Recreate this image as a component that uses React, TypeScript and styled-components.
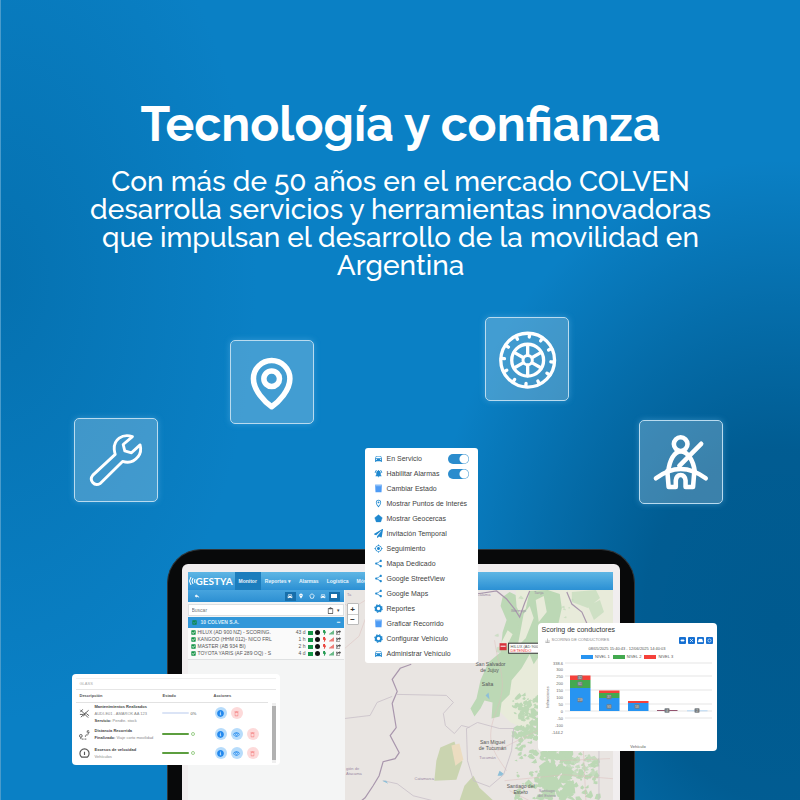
import React from "react";
import styled, { createGlobalStyle, css } from "styled-components";
import {
  MdDirectionsCar,
  MdNotificationsActive,
  MdShare,
  MdGpsFixed,
  MdOutlineLocationOn,
  MdReply,
  MdPlace,
  MdDeleteOutline,
  MdOutlineRemoveRedEye,
} from "react-icons/md";
import {
  FaPaperPlane,
  FaShareSquare,
  FaInfoCircle,
  FaSignal,
  FaBolt,
  FaCheckSquare,
  FaRegClipboard,
} from "react-icons/fa";

const GlobalStyle = createGlobalStyle`
  * { box-sizing: border-box; }
  body { margin: 0; background: #0a80c5; }
  button { font: inherit; padding: 0; border: 0; cursor: pointer; }
`;

const sans = `"Liberation Sans", Arial, sans-serif`;

const Page = styled.main`
  display: flex;
  flex-direction: column;
  min-height: 100vh;
  overflow: hidden;
  border-left: 1px solid #4a9bcb;
  font-family: ${sans};
  background:
    radial-gradient(ellipse 44% 58% at 97% 78%, #005a8f 0%, #005a8ff0 38%, #005a8f80 68%, #005a8f00 100%),
    radial-gradient(ellipse 32% 55% at 0% 35%, #0571b0 0%, #0571b000 100%),
    #0a80c5;
`;

const Intro = styled.header`
  padding: 94px 80px 0;
  text-align: center;
  color: #fff;
  font-family: Raleway, Lato, sans-serif;
`;

const Title = styled.h1`
  margin: 0;
  font-size: 48px;
  line-height: 60px;
  font-weight: 700;
`;

const Lead = styled.p`
  margin: 14px auto 0;
  max-width: 640px;
  font-size: 28px;
  line-height: 28px;
  font-weight: 500;
`;

const Scene = styled.section`
  position: relative;
  flex: 1;
  display: flex;
  flex-direction: column;
  margin-top: 37px;
`;

const Tiles = styled.div`
  display: grid;
  grid-template-columns: 156fr 255fr 154fr 84px;
  align-items: start;
  padding: 0 77px 0 73px;
  height: 232px;
`;

const Tile = styled.div<{ $drop: number }>`
  width: 84px;
  height: 84px;
  margin-top: ${(p) => p.$drop}px;
  border: 1px solid #b9dbef;
  border-radius: 5px;
  background: rgba(255, 255, 255, 0.23);
  box-shadow: 0 0 6px rgba(120, 195, 240, 0.4);

  svg {
    display: block;
    width: 100%;
    height: 100%;
    fill: none;
    stroke: #fff;
    stroke-linecap: round;
    stroke-linejoin: round;
  }
`;

const Device = styled.div`
  flex: 1;
  display: flex;
  width: 468px;
  min-width: 58%;
  align-self: center;
  padding: 14px 14px 0;
  border-radius: 34px 34px 0 0;
  border: 1px solid #303437;
  border-bottom: 0;
  background: #08090a;
`;

const Screen = styled.div`
  flex: 1;
  display: flex;
  flex-direction: column;
  padding: 8px 7px 0 6px;
  border-radius: 6px 6px 0 0;
  background: #f1eeef;
`;

const NavBar = styled.nav`
  display: flex;
  align-items: stretch;
  height: 18px;
  color: #fff;
  background: linear-gradient(#5fb6e4, #2b90d4);
`;

const Brand = styled.div`
  display: flex;
  align-items: center;
  width: 47px;
  font: 700 10px/18px Lato, sans-serif;

  svg {
    width: 8px;
    height: 10px;
    fill: none;
    stroke: #fff;
  }
`;

const NavLink = styled.a<{ $active?: boolean }>`
  padding: 0 4px;
  color: #e9f5fc;
  font: 700 5px/18px ${sans};
  white-space: nowrap;
  text-decoration: none;
  background: ${(p) => (p.$active ? "#1c7dbd" : "transparent")};
`;

const Workspace = styled.div`
  flex: 1;
  display: flex;
`;

const Sidebar = styled.aside`
  flex: 0 0 157px;
  padding-right: 1px;
  background: #f4f5f5;
`;

const ToolStrip = styled.div`
  display: flex;
  align-items: center;
  height: 12px;
  padding: 0 4px;
  color: #fff;
  background: linear-gradient(#47a4de, #2c8fd2);
`;

const Spacer = styled.span`
  flex: 1;
`;

const ToolButton = styled.button<{ $on?: boolean }>`
  display: flex;
  align-items: center;
  justify-content: center;
  width: 11px;
  height: 9px;
  color: #fff;
  background: ${(p) => (p.$on ? "#176fab" : "transparent")};

  svg {
    width: 6px;
    height: 6px;
  }
`;

const SearchRow = styled.div`
  display: flex;
  align-items: center;
  gap: 3px;
  height: 12px;
  margin: 2px 0 1px;
  padding: 0 3px;
  border: 1px solid #dcdfe1;
  background: #fff;
  color: #444;
  font-size: 5px;

  input {
    flex: 1;
    min-width: 0;
    height: 9px;
    padding: 0;
    border: 0;
    outline: 0;
    background: none;
    font: 5px/9px ${sans};
  }
  input::placeholder { color: #777; }
  svg { width: 7px; height: 7px; }
`;

const GroupRow = styled.div`
  display: flex;
  align-items: center;
  gap: 4px;
  height: 11px;
  padding: 0 4px;
  color: #d9eefa;
  background: #3197d9;
  font: 700 5px/11px ${sans};

  svg { width: 5px; height: 5px; color: #108b4f; }
`;

const Vehicles = styled.ul`
  margin: 0;
  padding: 1px 3px 2px;
  list-style: none;
  border-bottom: 1px solid #dfe1e2;
  background: #fafafa;
`;

const Vehicle = styled.li`
  display: flex;
  align-items: center;
  gap: 2px;
  height: 7px;
  color: #555;
  font: 5px/7px ${sans};
  white-space: nowrap;

  svg { width: 5px; height: 5px; flex: none; }
`;

const Mark = styled.i<{ $color: string; $round?: boolean }>`
  width: 5px;
  height: ${(p) => (p.$round ? 5 : 4)}px;
  border-radius: ${(p) => (p.$round ? "50%" : "0")};
  background: ${(p) => p.$color};
`;

const Tint = styled.span<{ $color: string }>`
  display: flex;
  color: ${(p) => p.$color};
`;

const MapArea = styled.div`
  position: relative;
  flex: 1;
  min-height: 210px;
  overflow: hidden;
  background: #e9e5e2;

  > svg {
    position: absolute;
    inset: 0;
    width: 100%;
    height: 100%;
    font-family: ${sans};
  }
`;

const ZoomControl = styled.div`
  position: absolute;
  left: 2px;
  top: 13px;
  display: grid;
  border: 1px solid #bbb;
  border-radius: 1px;
  background: #fff;

  button {
    width: 10px;
    height: 10px;
    font: 700 8px/9px ${sans};
    color: #333;
    background: #fff;
  }
  button + button { border-top: 1px solid #ccc; }
`;

const floating = css`
  position: absolute;
  border-radius: 4px;
  background: #fff;
`;

const Menu = styled.ul`
  ${floating}
  top: 131px;
  left: calc(50% - 36px);
  width: 113px;
  margin: 0;
  padding: 3px 0 2px 9px;
  border-radius: 3px;
  list-style: none;
`;

const MenuItem = styled.li`
  display: flex;
  align-items: center;
  height: 15px;
  color: #3f3f3f;
  font: 7px/15px ${sans};
  white-space: nowrap;

  > svg {
    flex: none;
    width: 9px;
    height: 9px;
    margin-right: 4px;
    color: #1f88cf;
  }
  label { flex: 1; }
`;

const Toggle = styled.input`
  appearance: none;
  width: 21px;
  height: 10px;
  margin: 0 9px 0 0;
  border-radius: 5px;
  background: radial-gradient(circle at 16px 5px, #fff 4px, #2b8ccd 5px);
`;

const Alerts = styled.section`
  ${floating}
  top: 357px;
  left: calc(50% - 329px);
  width: 208px;
  height: 91px;
  padding: 4px 4px 0 4px;
`;

const AlertsHead = styled.h2`
  margin: 0;
  padding: 0 4px;
  border-top: 1px solid #f0f0f0;
  border-bottom: 1px solid #e6e6e6;
  color: #aaa;
  font: 4px/10px ${sans};
`;

const AlertsBody = styled.div`
  display: flex;
`;

const AlertTable = styled.table`
  flex: 1;
  table-layout: fixed;
  border-collapse: collapse;
  color: #666;
  font: 4px/7px ${sans};

  th {
    height: 12px;
    padding: 0 4px;
    text-align: left;
    color: #555;
    font-weight: 700;
    border-bottom: 1px solid #e2e2e2;
  }
  td { height: 19px; padding: 0; }
  tbody tr:first-child td { height: 22px; }
`;

const Col = styled.col<{ $w: number }>`
  width: ${(p) => p.$w}px;
`;

const AlertName = styled.div`
  display: flex;
  align-items: center;
  gap: 5px;
  padding-left: 3px;

  svg {
    width: 11px;
    height: 11px;
    fill: none;
    stroke: #555;
  }
  p { margin: 0; white-space: nowrap; color: #888; }
  strong { color: #444; }
`;

const Status = styled.div`
  display: flex;
  align-items: center;
  gap: 2px;
  padding-left: 3px;
  color: #555;
`;

const Bar = styled.span<{ $full: boolean }>`
  width: 27px;
  height: 2px;
  border-radius: 1px;
  background: ${(p) => (p.$full ? "#5c9e3f" : "#dbe4f6")};
`;

const Ring = styled.span`
  width: 4px;
  height: 4px;
  border: 1px solid #9bcf8b;
  border-radius: 50%;
`;

const Actions = styled.div`
  display: flex;
  gap: 4px;
  padding-left: 5px;
`;

const RoundButton = styled.button<{ $danger?: boolean }>`
  display: flex;
  align-items: center;
  justify-content: center;
  width: 12px;
  height: 12px;
  border-radius: 50%;
  color: ${(p) => (p.$danger ? "#f58a8a" : "#2389ee")};
  background: ${(p) => (p.$danger ? "#fddada" : "#b7dcfb")};

  svg { width: 7px; height: 7px; }
`;

const ScrollTrack = styled.div`
  width: 4px;
  height: 60px;
  margin: 13px 0 0 4px;
  border: solid #eee;
  border-width: 3px 0;
  background: #b1b1b1;
`;

const Report = styled.section`
  ${floating}
  top: 306px;
  left: calc(50% + 137px);
  width: 179px;
  height: 128px;
  padding: 2px 4px 0;
`;

const ReportTitle = styled.h2`
  margin: 0;
  color: #333;
  font: 7px/10px ${sans};
`;

const ReportBar = styled.div`
  display: flex;
  align-items: center;
  gap: 2px;
  height: 10px;
  padding-left: 3px;
  color: #888;
  font: 4px/10px ${sans};
`;

const BlueButton = styled.button`
  width: 7px;
  height: 7px;
  border-radius: 1px;
  background: #1670d2;

  svg {
    display: block;
    width: 7px;
    height: 7px;
    fill: #fff;
    stroke: #fff;
  }
`;

const Period = styled.p`
  margin: 0;
  text-align: center;
  color: #555;
  font: 4px/7px ${sans};
`;

const Legend = styled.div`
  display: flex;
  justify-content: center;
  gap: 3px;
  color: #555;
  font: 4px/8px ${sans};
  padding-top: 1px;

  span {
    display: flex;
    align-items: center;
    gap: 2px;
  }
`;

const Swatch = styled.i<{ $color: string }>`
  width: 12px;
  height: 4px;
  background: ${(p) => p.$color};
`;

const Chart = styled.svg`
  display: block;
  width: 100%;
  font-family: ${sans};
`;

const Bucket = () => (
  <svg viewBox="0 0 24 24" fill="#4d9bf5">
    <path d="M3 2h18l-1 20H4z" />
    <path d="M3 2h18v4H3z" fill="#8abdf7" />
  </svg>
);
const Pentagon = () => (
  <svg viewBox="0 0 24 24" fill="currentColor">
    <path d="M12 2 22 10 18 21H6L2 10z" stroke="currentColor" strokeLinejoin="round" />
  </svg>
);
const Gear = () => (
  <svg viewBox="0 0 24 24" fill="none" stroke="currentColor">
    <circle cx="12" cy="12" r="7" strokeWidth="5" />
    <circle cx="12" cy="12" r="10" strokeWidth="3" strokeDasharray="4 3.85" />
  </svg>
);

const menuEntries: { label: string; icon: React.ReactNode; toggle?: string }[] = [
  { label: "En Servicio", icon: <MdDirectionsCar />, toggle: "servicio" },
  { label: "Habilitar Alarmas", icon: <MdNotificationsActive />, toggle: "alarmas" },
  { label: "Cambiar Estado", icon: <Bucket /> },
  { label: "Mostrar Puntos de Interés", icon: <MdOutlineLocationOn /> },
  { label: "Mostrar Geocercas", icon: <Pentagon /> },
  { label: "Invitación Temporal", icon: <FaPaperPlane /> },
  { label: "Seguimiento", icon: <MdGpsFixed /> },
  { label: "Mapa Dedicado", icon: <MdShare /> },
  { label: "Google StreetView", icon: <MdShare /> },
  { label: "Google Maps", icon: <MdShare /> },
  { label: "Reportes", icon: <Gear /> },
  { label: "Graficar Recorrido", icon: <Bucket /> },
  { label: "Configurar Vehículo", icon: <Gear /> },
  { label: "Administrar Vehículo", icon: <MdDirectionsCar /> },
];

const vehicles = [
  { name: "HILUX (AD 900 NZ) - SCORING.", age: "43 d", bolt: "#159447", signal: "#159447" },
  { name: "KANGOO (HHM 012)- NICO FRL", age: "1 h", bolt: "#e8352e", signal: "#e8352e" },
  { name: "MASTER (AB 934 BI)", age: "2 h", bolt: "#e8352e", signal: "#e8352e" },
  { name: "TOYOTA YARIS (AF 289 OQ) - S", age: "4 d", bolt: "#159447", signal: "#159447" },
];

function random(seed: number) {
  let s = seed;
  return () => {
    s = (s * 16807) % 2147483647;
    return s / 2147483647;
  };
}

function thicket(seed: number, count: number, x: number, y: number, w: number, h: number, size: number) {
  const next = random(seed);
  let d = "";
  for (let i = 0; i < count; i++) {
    const px = x + next() * w;
    const py = y + next() * h;
    const r = size * (0.4 + next());
    d += `M${px} ${py}l${r} ${-r * next()}l${r * next()} ${r}l${-r * 0.6} ${r * next()}l${-r} ${-r * 0.3}z`;
  }
  return d;
}

function RegionMap() {
  return (
    <svg viewBox="346 590 267 210" preserveAspectRatio="xMinYMin slice" role="img" aria-label="Mapa">
      <path d="M516 590h97v80h-60l-24 60-18-8-14-14 4-30 18-44z" fill="#e8ebda" />
      <g fill="#bcd8b5">
        <path d="M503 597l7-5 6 3 1 12 3 6 6-4 4-18 18-1 12 4 2 14-4 18-10 4-6 22-8 12-4-10-8 14-10 12-2 14-8 8-2 14-8 2 1-16-8-2-4 8-6 8-4-8 6-10 4-18 8-18 12-10 2-20 4-12-6-14z" />
        <path d="M572 592l24-2 4 8-12 10-16-6zM588 606l12-6 4 12-10 8z" opacity=".6" />
        <path d={thicket(7, 90, 512, 694, 26, 44, 3)} />
        <path d={thicket(31, 170, 513, 726, 84, 72, 3)} />
        <path d={thicket(83, 100, 538, 742, 30, 56, 5)} />
        <path d={thicket(19, 50, 560, 750, 34, 24, 3)} opacity=".8" />
        <path d={thicket(51, 24, 496, 592, 80, 60, 3)} opacity=".6" />
      </g>
      <g fill="#cad4b0">
        <path d="M441 747l14-6 4 12 4 8-6 18-22 1 2-20z" />
        <path d="M465 785l9-10 6 12 14 13h-34z" />
      </g>
      <path d="M452 745l8-2 4 16-8 6z" fill="#ecdcc0" />
      <path d="M524 614l6-8 4 12-8 20-8 8zM536 600l8-4 3 16-8 10zM508 630l5 4-8 16-4-6z" fill="#e8ebda" />
      <g fill="none" stroke="#dcbdbb" strokeWidth=".7" opacity=".7">
        <path d="M346 604c10 10 20-10 36-8M495 640c4 30 14 40 2 70s-4 40 10 60M498 750l40-20 70-10M505 780l60-6 48 4M346 648l14-12 8-22M510 790l20 10M560 760l50-2M582 720l4 80" />
      </g>
      <g fill="none" stroke="#a997ad" strokeWidth="1.2">
        <path d="M412 664l-11 4-8 11 5 12-5 12 4 24-6 8 9 17-4 6-12 3-4 14-6 10-8 12-5 4" />
        <path d="M477 594l20-3 10 8 8 10 5 8 5-14 5-12M567 592l5 12 10 8 8 18 5 15" />
      </g>
      <g fill="none" stroke="#c8bfc8" strokeWidth=".8">
        <path d="M346 718l25-3 7-13 15-6M397 694l50 1 7 7-10 11 2 12 9 8 7-8 8 2" />
        <path d="M467 728l11-6 22 6h14l-2 22-8 24-14 12-16-6-6-20zM599 750v50M384 780l14 3 16 12 20 5" />
      </g>
      <path d="M486 695l3-3 1 7zM498 775l2-5 4 3-2 2zM383 780l4 0 2 3z" fill="#8dbfd8" />
      <g fill="#555" fontSize="5" textAnchor="middle">
        <text x="491" y="666">San Salvador</text>
        <text x="490" y="672">de Jujuy</text>
        <text x="488" y="686">Salta</text>
        <text x="493" y="743">San Miguel</text>
        <text x="493" y="749">de Tucumán</text>
        <text x="521" y="787">Santiago del</text>
        <text x="521" y="793">Estero</text>
      </g>
      <g fill="#9b8aa3" fontSize="4" textAnchor="middle">
        <text x="488" y="758">Tucumán</text>
        <text x="425" y="779">Catamarca</text>
        <text x="347" y="769" textAnchor="start">gión de</text>
        <text x="347" y="774" textAnchor="start">Atacama</text>
        <text x="547" y="791">Santiago</text>
        <text x="547" y="796">del Estero</text>
        <text x="519" y="612">Bermejo</text>
        <text x="539" y="594">Tarija</text>
        <text x="484" y="596">Calama</text>
        <text x="350" y="596">Ta</text>
      </g>
      <rect x="500" y="643" width="7" height="7" fill="#d7323b" />
      <path d="M501 646h5" stroke="#fff" />
      <rect x="509" y="643" width="60" height="10" fill="#fff" stroke="#333" />
      <text x="511" y="648" fontSize="4" fill="#555">HILUX (AD 900 NZ)</text>
      <text x="511" y="652" fontSize="4" fill="#e33">DETENIDO</text>
    </svg>
  );
}

const treads = Array.from({ length: 12 }, (_, i) => i * 30 + 4);
const ticks: [string, number][] = [
  ["338.6", 663], ["300", 669], ["250", 676], ["200", 683], ["150", 690],
  ["100", 697], ["50", 704], ["0", 711], ["-50", 718], ["-100", 725], ["-144.2", 732],
];
const bars: { x: number; parts: [number, number, string][] }[] = [
  { x: 570, parts: [[675.5, 4.5, "#f5413a"], [680, 8, "#43a94f"], [688, 23, "#2794f1"]] },
  { x: 599, parts: [[690.5, 2.5, "#f5413a"], [693, 5, "#43a94f"], [698, 13, "#2794f1"]] },
  { x: 628, parts: [[701, 2, "#f5413a"], [703, 8, "#2794f1"]] },
  { x: 657, parts: [[710, 1, "#93546f"]] },
  { x: 687, parts: [[710.5, 0.7, "#9fcdf5"]] },
];
const badges: [number, number, string][] = [
  [580, 677.5, "32"], [580, 684, "61"], [580, 700, "159"], [609, 697, "37"],
  [609, 706.5, "93"], [637, 706.5, "58"], [667, 710.5, "4"], [697, 710.5, "2"],
];

function ScoringChart() {
  return (
    <Chart viewBox="542 661 171 89" role="img" aria-label="Scoring de conductores">
      <g stroke="#d4d4d4" strokeWidth=".6">
        {[663, 676, 690, 704, 711, 718].map((y) => (
          <path key={y} d={`M565 ${y}H712`} />
        ))}
      </g>
      <g fill="#666" fontSize="4" textAnchor="end">
        {ticks.map(([label, y]) => (
          <text key={label} x="563" y={y + 2}>{label}</text>
        ))}
      </g>
      {bars.map((bar) =>
        bar.parts.map(([y, h, fill]) => (
          <rect key={`${bar.x}-${y}`} x={bar.x} y={y} width="20.5" height={h} fill={fill} />
        )),
      )}
      {badges.map(([x, y, value]) => (
        <g key={`${x}-${y}`}>
          <rect x={x - 2.5} y={y - 2.2} width="5" height="4.4" rx=".8" fill="#777c80" />
          <text x={x} y={y + 1} fontSize="3" fill="#ddd" textAnchor="middle">{value}</text>
        </g>
      ))}
      <text x="638" y="747.5" fontSize="4" fill="#555" textAnchor="middle">Vehículo</text>
      <text transform="translate(549 697) rotate(-90)" fontSize="4" fill="#666" textAnchor="middle">
        Infracciones
      </text>
    </Chart>
  );
}

export default function App() {
  return (
    <Page>
      <GlobalStyle />
      <Intro>
        <Title>Tecnología y confianza</Title>
        <Lead>
          Con más de 50 años en el mercado COLVEN desarrolla servicios y herramientas innovadoras
          que impulsan el desarrollo de la movilidad en Argentina
        </Lead>
      </Intro>

      <Scene>
        <Tiles>
          <Tile $drop={101}>
            <svg viewBox="43 354 257 255" strokeWidth="9">
              <path d="M223 408C190 398 164 418 166 448Q167 457 169 464L99 529C86 545 103 566 122 555L192 486Q222 495 240 472C250 460 250 445 247 434L220 459 199 453 194 433Z" />
            </svg>
          </Tile>
          <Tile $drop={23}>
            <svg viewBox="510 121 252 250" strokeWidth="17">
              <path d="M635 322C614 307 579 272 579 236A56 56 0 0 1 691 236C691 272 656 307 635 322Z" />
              <circle cx="635" cy="236" r="24" />
            </svg>
          </Tile>
          <Tile $drop={0}>
            <svg viewBox="45 52 246 247" strokeWidth="10">
              <circle cx="170" cy="179" r="81" />
              <circle cx="170" cy="179" r="48" />
              <circle cx="170" cy="179" r="14" strokeWidth="9" />
              {[0, 60, 120, 180, 240, 300].map((a) => (
                <path key={a} d="M170 163V132" transform={`rotate(${a} 170 179)`} />
              ))}
              {treads.map((a) => (
                <path key={a} d="M170 109V99" transform={`rotate(${a} 170 179)`} />
              ))}
            </svg>
          </Tile>
          <Tile $drop={103}>
            <svg viewBox="507 361 252 252" strokeWidth="14">
              <circle cx="632" cy="432" r="21" />
              <path d="M594 515C598 482 611 456 632 454C655 456 671 482 675 515" />
              <path d="M695 431 628 499" />
              <path d="M556 537Q632 480 709 537" />
              <path d="M591 515 595 564H617V544Q619 527 632 527T647 544V564H670L674 515" />
            </svg>
          </Tile>
        </Tiles>

        <Device>
          <Screen>
            <NavBar>
              <Brand>
                <svg viewBox="0 0 8 10">
                  <path d="M3 1Q0 5 3 9M5 2Q3 5 5 8M7 3Q6 5 7 7" />
                </svg>
                GESTYA
              </Brand>
              <NavLink href="#monitor" $active>Monitor</NavLink>
              <NavLink href="#reportes">Reportes ▾</NavLink>
              <NavLink href="#alarmas">Alarmas</NavLink>
              <NavLink href="#logistica">Logística</NavLink>
              <NavLink href="#moviles">Móviles</NavLink>
            </NavBar>
            <Workspace>
              <Sidebar>
                <ToolStrip>
                  <ToolButton aria-label="Volver"><MdReply /></ToolButton>
                  <Spacer />
                  <ToolButton $on aria-label="Vehículos"><MdDirectionsCar /></ToolButton>
                  <ToolButton aria-label="Puntos"><MdPlace /></ToolButton>
                  <ToolButton aria-label="Geocercas">
                    <svg viewBox="0 0 24 24" fill="none" stroke="#fff" strokeWidth="3"><path d="M12 3l9 7-4 11H7L3 10z" /></svg>
                  </ToolButton>
                  <ToolButton aria-label="Conductores"><MdDirectionsCar /></ToolButton>
                  <ToolButton $on aria-label="Lista">
                    <svg viewBox="0 0 6 6" fill="#fff"><path d="M0 1h6v4H0z" /></svg>
                  </ToolButton>
                </ToolStrip>
                <SearchRow>
                  <input aria-label="Buscar" placeholder="Buscar" />
                  <FaRegClipboard /> ▾
                </SearchRow>
                <GroupRow>
                  <FaCheckSquare /> 10 COLVEN S.A. <Spacer /> ━
                </GroupRow>
                <Vehicles>
                  {vehicles.map((v) => (
                    <Vehicle key={v.name}>
                      <Tint $color="#159447"><FaCheckSquare /></Tint>
                      {v.name}
                      <Spacer />
                      {v.age}
                      <Mark $color="#159447" />
                      <Mark $color="#111" $round />
                      <Tint $color={v.bolt}><FaBolt /></Tint>
                      <Tint $color={v.signal}><FaSignal /></Tint>
                      <FaShareSquare />
                    </Vehicle>
                  ))}
                </Vehicles>
              </Sidebar>
              <MapArea>
                <RegionMap />
                <ZoomControl>
                  <button aria-label="Acercar">+</button>
                  <button aria-label="Alejar">−</button>
                </ZoomControl>
              </MapArea>
            </Workspace>
          </Screen>
        </Device>

        <Menu>
          {menuEntries.map((entry) => (
            <MenuItem key={entry.label}>
              {entry.icon}
              {entry.toggle ? (
                <>
                  <label htmlFor={entry.toggle}>{entry.label}</label>
                  <Toggle id={entry.toggle} type="checkbox" defaultChecked />
                </>
              ) : (
                entry.label
              )}
            </MenuItem>
          ))}
        </Menu>

        <Alerts>
          <AlertsHead>GLASS</AlertsHead>
          <AlertsBody>
            <AlertTable>
              <colgroup>
                <Col $w={83} />
                <Col $w={51} />
                <Col $w={58} />
              </colgroup>
              <thead>
                <tr><th>Descripción</th><th>Estado</th><th>Acciones</th></tr>
              </thead>
              <tbody>
                <tr>
                  <td>
                    <AlertName>
                      <svg viewBox="0 0 24 24" strokeWidth="2">
                        <path d="M3 4l17 17M21 5L4 20M3 9l5-6M16 12l6 5M10 18l4-8M2 14h7" />
                      </svg>
                      <p>
                        <strong>Mantenimientos Realizados</strong><br />
                        AUDI-E01 - AMAROK AA 123<br />
                        <strong>Servicio:</strong> Pendte. stock
                      </p>
                    </AlertName>
                  </td>
                  <td><Status><Bar $full={false} />0%</Status></td>
                  <td>
                    <Actions>
                      <RoundButton aria-label="Información"><FaInfoCircle /></RoundButton>
                      <RoundButton $danger aria-label="Eliminar"><MdDeleteOutline /></RoundButton>
                    </Actions>
                  </td>
                </tr>
                <tr>
                  <td>
                    <AlertName>
                      <svg viewBox="0 0 24 24" strokeWidth="2">
                        <circle cx="4" cy="15" r="3" />
                        <path d="M4 18v4h12M18 4h4v4h-4zM20 8v5h-6v4" strokeDasharray="4 2" />
                      </svg>
                      <p>
                        <strong>Distancia Recorrida</strong><br />
                        <strong>Finalizado:</strong> Viaje corto movilidad
                      </p>
                    </AlertName>
                  </td>
                  <td><Status><Bar $full /><Ring /></Status></td>
                  <td>
                    <Actions>
                      <RoundButton aria-label="Información"><FaInfoCircle /></RoundButton>
                      <RoundButton aria-label="Ver"><MdOutlineRemoveRedEye /></RoundButton>
                      <RoundButton $danger aria-label="Eliminar"><MdDeleteOutline /></RoundButton>
                    </Actions>
                  </td>
                </tr>
                <tr>
                  <td>
                    <AlertName>
                      <svg viewBox="0 0 24 24" strokeWidth="2.5">
                        <path d="M6 20A10 10 0 1 1 18 20ZM12 15V8" />
                      </svg>
                      <p>
                        <strong>Excesos de velocidad</strong><br />
                        Vehículos
                      </p>
                    </AlertName>
                  </td>
                  <td><Status><Bar $full /><Ring /></Status></td>
                  <td>
                    <Actions>
                      <RoundButton aria-label="Información"><FaInfoCircle /></RoundButton>
                      <RoundButton aria-label="Ver"><MdOutlineRemoveRedEye /></RoundButton>
                      <RoundButton $danger aria-label="Eliminar"><MdDeleteOutline /></RoundButton>
                    </Actions>
                  </td>
                </tr>
              </tbody>
            </AlertTable>
            <ScrollTrack />
          </AlertsBody>
        </Alerts>

        <Report>
          <ReportTitle>Scoring de conductores</ReportTitle>
          <ReportBar>
            <svg width="5" height="5" viewBox="0 0 10 10" fill="none" stroke="#888">
              <path d="M1 9h8M2 9V5M5 9V1M8 9V4" />
            </svg>
            SCORING DE CONDUCTORES
            <Spacer />
            <BlueButton aria-label="Imprimir"><svg viewBox="0 0 7 7"><path d="M2 3h3v1H2z" strokeWidth=".8" /></svg></BlueButton>
            <BlueButton aria-label="Ampliar"><svg viewBox="0 0 7 7"><path d="M2 2l3 3M5 2L2 5" strokeWidth=".7" /></svg></BlueButton>
            <BlueButton aria-label="Vehículo"><svg viewBox="0 0 7 7"><path d="M2 2h3l1 3H1z" strokeWidth=".3" /></svg></BlueButton>
            <BlueButton aria-label="Actualizar"><svg viewBox="0 0 7 7"><circle cx="3.5" cy="3.5" r="1.6" fill="none" strokeWidth=".6" /></svg></BlueButton>
          </ReportBar>
          <Period>08/05/2025 15:40:43 - 12/06/2025 14:40:03</Period>
          <Legend>
            <span><Swatch $color="#2794f1" />NIVEL 1</span>
            <span><Swatch $color="#43a94f" />NIVEL 2</span>
            <span><Swatch $color="#f5413a" />NIVEL 3</span>
          </Legend>
          <ScoringChart />
        </Report>
      </Scene>
    </Page>
  );
}
